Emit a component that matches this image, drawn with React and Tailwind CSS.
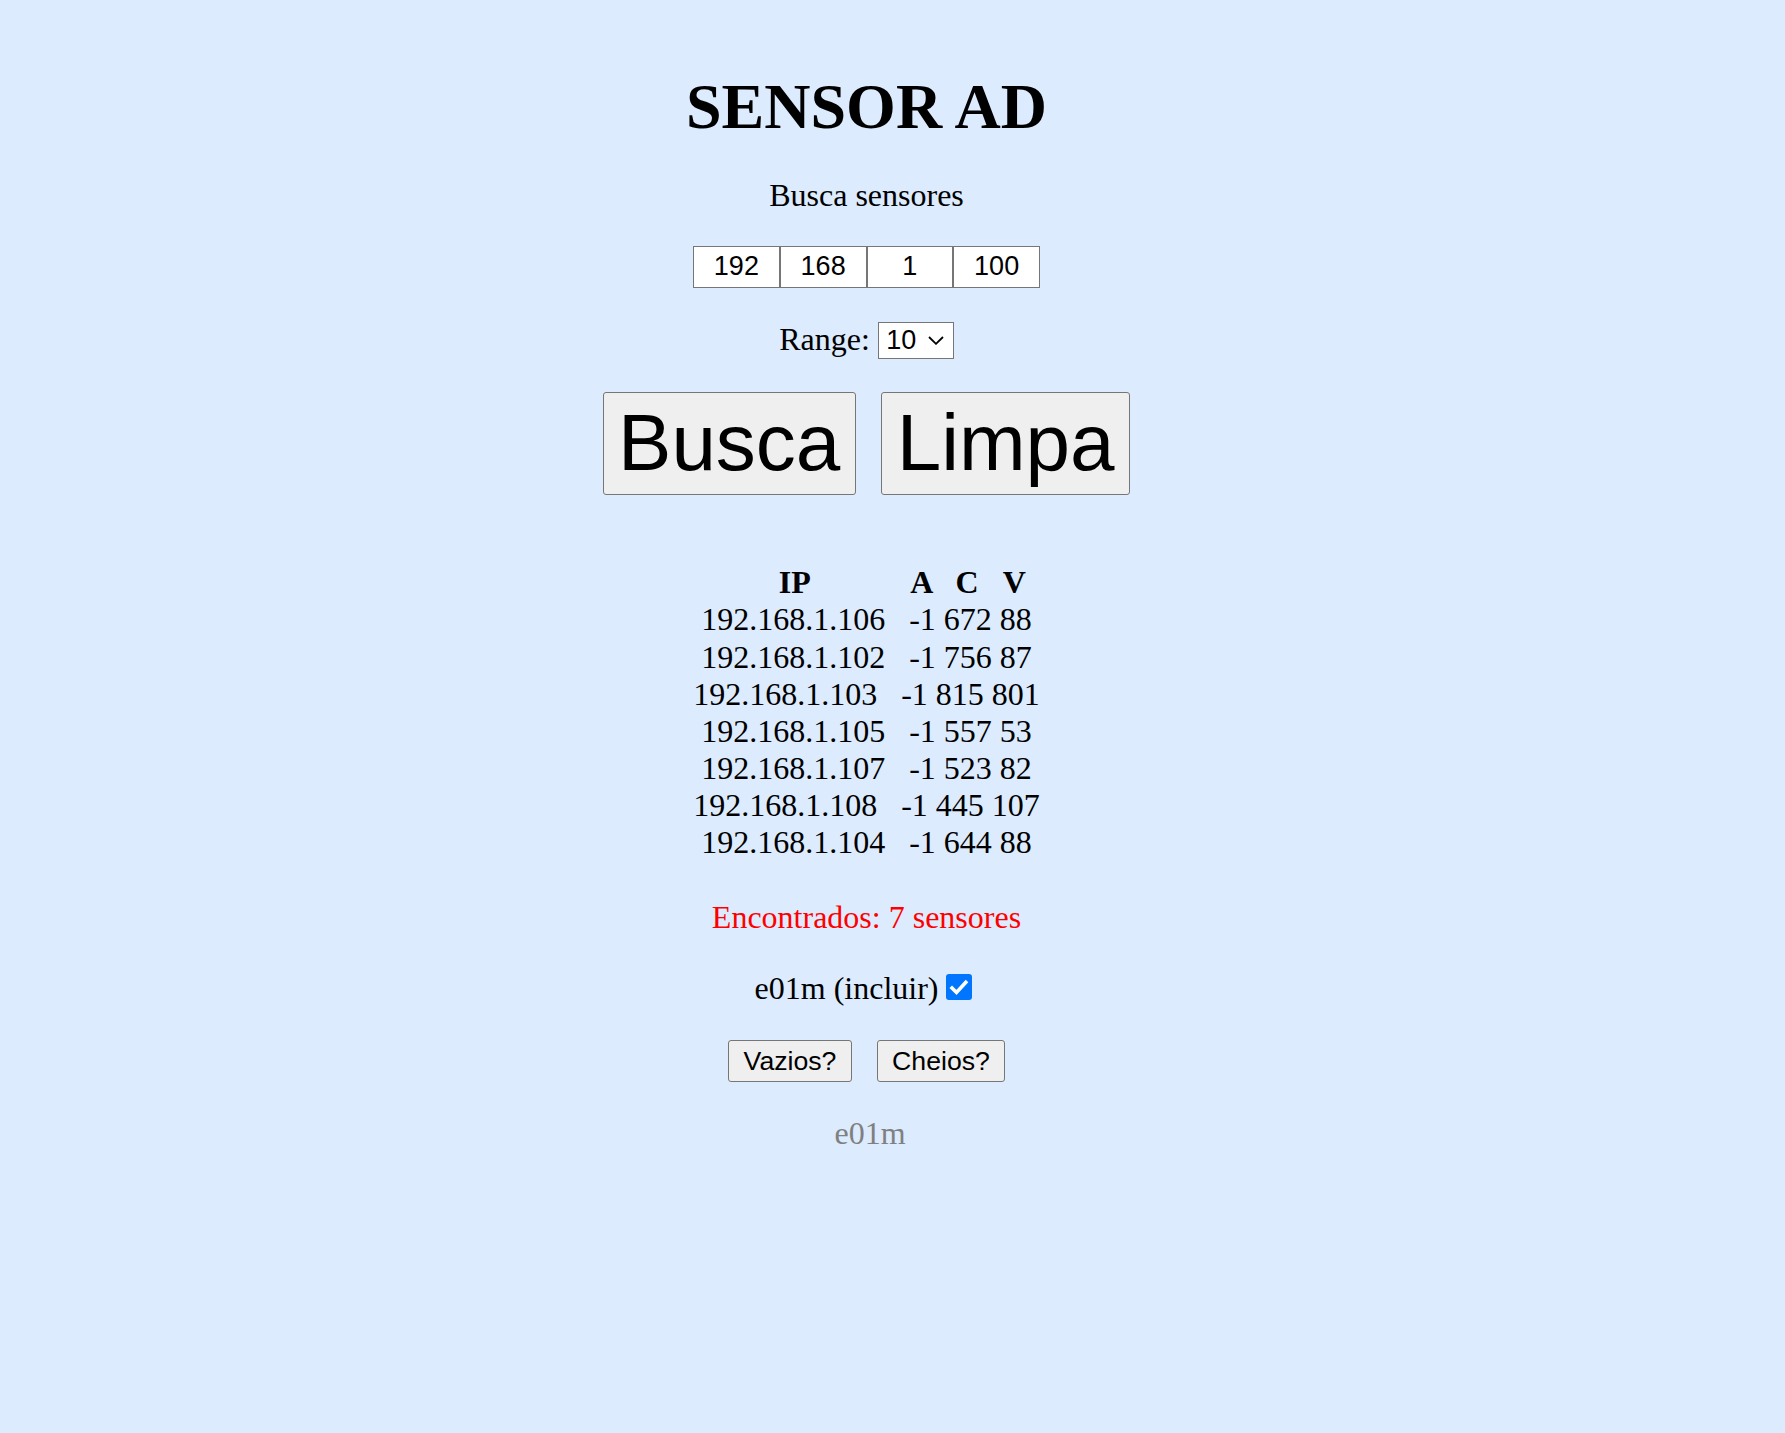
import React from "react";

const rows = [
  "192.168.1.106   -1 672 88",
  "192.168.1.102   -1 756 87",
  "192.168.1.103   -1 815 801",
  "192.168.1.105   -1 557 53",
  "192.168.1.107   -1 523 82",
  "192.168.1.108   -1 445 107",
  "192.168.1.104   -1 644 88",
];

const serif = "font-['Liberation_Serif','Times_New_Roman',serif]";
const sans = "font-['Liberation_Sans',Arial,sans-serif]";

export default function App() {
  return (
    <div className="min-h-screen w-full bg-[#dcebfe] text-black">
      <div className={`w-[1733px] flex flex-col items-center ${serif} pb-[200px]`}>
        <h1 className="mt-[70px] text-[64px] font-bold leading-[74px]">SENSOR AD</h1>

        <p className="mt-[33.4px] text-[32px] leading-[37px]">Busca sensores</p>

        <div className="mt-[31.4px] flex">
          {["192", "168", "1", "100"].map((v) => (
            <input
              key={v}
              readOnly
              value={v}
              className={`box-border h-[42px] w-[86.75px] border border-[#767676] bg-white text-center text-[27px] text-black outline-none ${sans}`}
            />
          ))}
        </div>

        <div className="mt-[33.8px] flex h-[37px] items-start">
          <span className="text-[32px] leading-[34px]">Range:</span>
          <div
            className={`ml-[8px] box-border flex h-[37px] w-[76px] items-center border border-[#767676] bg-white pl-[7.5px] ${sans}`}
          >
            <span className="text-[27px] leading-[35px]">10</span>
            <svg className="ml-[11.5px]" width="16" height="9" viewBox="0 0 16 9">
              <path d="M1 1 L8 7.8 L15 1" fill="none" stroke="#000" strokeWidth="1.8" />
            </svg>
          </div>
        </div>

        <div className="mt-[33px] flex gap-[25px]">
          <button
            className={`box-border flex h-[103.4px] w-[253.3px] items-center justify-center rounded-[3px] border border-[#767676] bg-[#efefef] text-[80px] ${sans}`}
          >
            Busca
          </button>
          <button
            className={`box-border flex h-[103.4px] w-[249.6px] items-center justify-center rounded-[3px] border border-[#767676] bg-[#efefef] text-[80px] ${sans}`}
          >
            Limpa
          </button>
        </div>

        <div className="mt-[69.5px] ml-[71.6px] flex text-[32px] font-bold leading-[37px]">
          <span>IP</span>
          <span className="ml-[99.6px]">A</span>
          <span className="ml-[22.2px]">C</span>
          <span className="ml-[24.1px]">V</span>
        </div>

        <div className="flex flex-col items-center">
          {rows.map((r) => (
            <div key={r} className="whitespace-pre text-[32px] leading-[37.1px]">
              {r}
            </div>
          ))}
        </div>

        <p className="mt-[37.4px] text-[32px] leading-[37px] text-[#ff0000]">Encontrados: 7 sensores</p>

        <div className="mt-[34.6px] flex items-start">
          <span className="text-[32px] leading-[37px]">e01m (incluir)</span>
          <span className="ml-[8px] mr-[6px] mt-[3.8px] flex h-[26px] w-[26px] items-center justify-center rounded-[3px] bg-[#0075ff]">
            <svg width="26" height="26" viewBox="0 0 26 26">
              <path d="M6 14 L10.5 18.5 L19.8 8.3" fill="none" stroke="#fff" strokeWidth="3.6" strokeLinecap="square" />
            </svg>
          </span>
        </div>

        <div className="mt-[32.8px] flex gap-[24.6px]">
          <button
            className={`box-border flex h-[42.4px] w-[124.4px] items-center justify-center rounded-[3px] border border-[#767676] bg-[#efefef] text-[26.67px] ${sans}`}
          >
            Vazios?
          </button>
          <button
            className={`box-border flex h-[42.4px] w-[128.4px] items-center justify-center rounded-[3px] border border-[#767676] bg-[#efefef] text-[26.67px] ${sans}`}
          >
            Cheios?
          </button>
        </div>

        <p className="mt-[33px] ml-[7px] text-[32px] leading-[37px] text-[#808080]">e01m</p>
      </div>
    </div>
  );
}
